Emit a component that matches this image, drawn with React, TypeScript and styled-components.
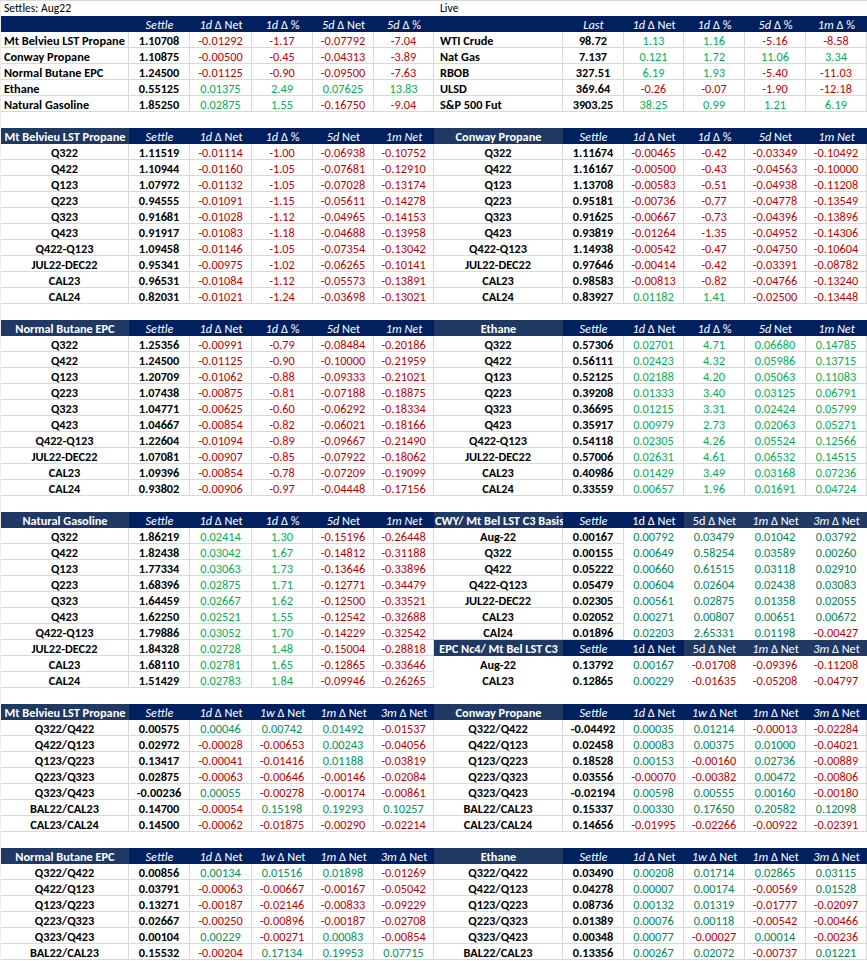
import React from 'react';
import styled, { createGlobalStyle } from 'styled-components';

const Global = createGlobalStyle`
  html, body { margin: 0; padding: 0; background: #ffffff; }
  body { font-family: Carlito, Lato, "Liberation Sans", sans-serif; color: #000; }
`;

const RED = '#c00000';
const GREEN_BRIGHT = '#00b050';
const GREEN_DARK = '#00935a';
const GREEN_TEAL = '#00875a';
const NAVY = '#002060';
const NAVY_LIGHT = '#1f3864';
const GRID = '#d9d9d9';

const LEFT_COLS = '128px 61px 62px 61px 61px 60px';
const RIGHT_COLS = '129px 61px 60px 61px 61px 61px';

type Head = [string, string];
type Row = string[];
type Section = {
  title: string;
  titleAlign?: 'left' | 'center';
  heads: Head[];
  lightHeads?: number[];
  rows: Row[];
  green: string;
  plainValues?: boolean;
  plainAll?: boolean;
};

const Sheet = styled.div`
  display: flex;
  width: 866px;
  border-top: 1px solid ${GRID};
  border-left: 1px solid #ececec;
  font-size: 12.3px;
  line-height: 15px;
`;

const Panel = styled.div`
  display: flex;
  flex-direction: column;
  width: 433px;
`;

const Table = styled.div<{ $cols: string }>`
  display: grid;
  grid-template-columns: ${(p) => p.$cols};
`;

const TitleCell = styled.div<{ $pad: number }>`
  grid-column: 1 / -1;
  height: 15px;
  line-height: 15px;
  font-size: 11.6px;
  padding-left: ${(p) => p.$pad}px;
`;

const Blank = styled.div`
  grid-column: 1 / -1;
  height: 16px;
`;

const HeadCell = styled.div<{ $bg: string; $align?: 'left' | 'center'; $bold?: boolean }>`
  box-sizing: border-box;
  height: 16px;
  padding-top: 1px;
  background: ${(p) => p.$bg};
  color: #ffffff;
  display: flex;
  align-items: center;
  justify-content: ${(p) => (p.$align === 'left' ? 'flex-start' : 'center')};
  padding-left: ${(p) => (p.$align === 'left' ? '1px' : '0')};
  font-weight: ${(p) => (p.$bold ? 700 : 400)};
  white-space: nowrap;
  overflow: hidden;
`;

const It = styled.span`
  font-style: italic;
`;

const DataCell = styled.div<{
  $color: string;
  $bold?: boolean;
  $align?: 'left' | 'center';
  $pad?: number;
  $plain?: boolean;
}>`
  height: 16px;
  box-sizing: border-box;
  padding-top: 1px;
  border-right: 1px solid ${(p) => (p.$plain ? 'transparent' : GRID)};
  border-bottom: 1px solid ${(p) => (p.$plain ? 'transparent' : GRID)};
  color: ${(p) => p.$color};
  font-weight: ${(p) => (p.$bold ? 700 : 400)};
  display: flex;
  align-items: center;
  justify-content: ${(p) => (p.$align === 'left' ? 'flex-start' : 'center')};
  padding-left: ${(p) => p.$pad ?? 0}px;
  white-space: nowrap;
  overflow: hidden;
`;

const HeadText: React.FC<{ h: Head }> = ({ h }) => (
  <>
    {h[0] && <It>{h[0]}</It>}
    {h[1] && <span>{h[1]}</span>}
  </>
);

const tone = (v: string, green: string) => (v.trim().startsWith('-') ? RED : green);

const SectionTable: React.FC<{ s: Section; cols: string }> = ({ s, cols }) => (
  <Table $cols={cols}>
    <HeadCell $bg={NAVY_LIGHT} $bold $align={s.titleAlign}>
      {s.title}
    </HeadCell>
    {s.heads.map((h, i) => (
      <HeadCell key={i} $bg={s.lightHeads?.includes(i) ? NAVY_LIGHT : NAVY}>
        <HeadText h={h} />
      </HeadCell>
    ))}
    {s.rows.map((r, ri) => (
      <React.Fragment key={ri}>
        <DataCell $color="#000" $bold $plain={s.plainAll}>
          {r[0]}
        </DataCell>
        <DataCell $color="#000" $bold $plain={s.plainAll}>
          {r[1]}
        </DataCell>
        {r.slice(2).map((v, vi) => (
          <DataCell key={vi} $color={tone(v, s.green)} $plain={s.plainAll || s.plainValues}>
            {v}
          </DataCell>
        ))}
      </React.Fragment>
    ))}
  </Table>
);

type Summary = { title: string; pad: number; heads: Head[]; rows: Row[] };

const SummaryTable: React.FC<{ s: Summary; cols: string }> = ({ s, cols }) => (
  <Table $cols={cols}>
    <TitleCell $pad={s.pad}>{s.title}</TitleCell>
    <HeadCell $bg={NAVY} />
    {s.heads.map((h, i) => (
      <HeadCell key={i} $bg={NAVY}>
        <HeadText h={h} />
      </HeadCell>
    ))}
    {s.rows.map((r, ri) => (
      <React.Fragment key={ri}>
        <DataCell $color="#000" $bold $align="left" $pad={s.pad}>
          {r[0]}
        </DataCell>
        <DataCell $color="#000" $bold>
          {r[1]}
        </DataCell>
        {r.slice(2).map((v, vi) => (
          <DataCell key={vi} $color={tone(v, GREEN_BRIGHT)}>
            {v}
          </DataCell>
        ))}
      </React.Fragment>
    ))}
  </Table>
);

const D = '\u00a0Δ\u00a0';

const settlesTop: Summary = {
  title: 'Settles: Aug22',
  pad: 3,
  heads: [
    ['Settle', ''],
    ['1d', `${D}Net`],
    ['1d', `${D}%`],
    ['5d', `${D}Net`],
    ['5d', `${D}%`],
  ],
  rows: [
    ['Mt Belvieu LST Propane', '1.10708', '-0.01292', '-1.17', '-0.07792', '-7.04'],
    ['Conway Propane', '1.10875', '-0.00500', '-0.45', '-0.04313', '-3.89'],
    ['Normal Butane EPC', '1.24500', '-0.01125', '-0.90', '-0.09500', '-7.63'],
    ['Ethane', '0.55125', '0.01375', '2.49', '0.07625', '13.83'],
    ['Natural Gasoline', '1.85250', '0.02875', '1.55', '-0.16750', '-9.04'],
  ],
};

const liveTop: Summary = {
  title: 'Live',
  pad: 6,
  heads: [
    ['Last', ''],
    ['1d', `${D}Net`],
    ['1d', `${D}%`],
    ['5d', `${D}%`],
    ['1m', `${D}%`],
  ],
  rows: [
    ['WTI Crude', '98.72', '1.13', '1.16', '-5.16', '-8.58'],
    ['Nat Gas', '7.137', '0.121', '1.72', '11.06', '3.34'],
    ['RBOB', '327.51', '6.19', '1.93', '-5.40', '-11.03'],
    ['ULSD', '369.64', '-0.26', '-0.07', '-1.90', '-12.18'],
    ['S&P 500 Fut', '3903.25', '38.25', '0.99', '1.21', '6.19'],
  ],
};

const outrightHeads: Head[] = [
  ['Settle', ''],
  ['1d', `${D}Net`],
  ['1d', `${D}%`],
  ['5d', '\u00a0Net'],
  ['1m Net', ''],
];

const spreadHeads: Head[] = [
  ['Settle', ''],
  ['1d', `${D}Net`],
  ['1w', `${D}Net`],
  ['1m', `${D}Net`],
  ['3m', `${D}Net`],
];

const basisHeads: Head[] = [
  ['Settle', ''],
  ['', '1d Δ Net'],
  ['', '5d Δ Net'],
  ['1m', `${D}Net`],
  ['3m', `${D}Net`],
];

const mtBelvieu: Section = {
  title: 'Mt Belvieu LST Propane',
  heads: outrightHeads,
  green: GREEN_BRIGHT,
  rows: [
    ['Q322', '1.11519', '-0.01114', '-1.00', '-0.06938', '-0.10752'],
    ['Q422', '1.10944', '-0.01160', '-1.05', '-0.07681', '-0.12910'],
    ['Q123', '1.07972', '-0.01132', '-1.05', '-0.07028', '-0.13174'],
    ['Q223', '0.94555', '-0.01091', '-1.15', '-0.05611', '-0.14278'],
    ['Q323', '0.91681', '-0.01028', '-1.12', '-0.04965', '-0.14153'],
    ['Q423', '0.91917', '-0.01083', '-1.18', '-0.04688', '-0.13958'],
    ['Q422-Q123', '1.09458', '-0.01146', '-1.05', '-0.07354', '-0.13042'],
    ['JUL22-DEC22', '0.95341', '-0.00975', '-1.02', '-0.06265', '-0.10141'],
    ['CAL23', '0.96531', '-0.01084', '-1.12', '-0.05573', '-0.13891'],
    ['CAL24', '0.82031', '-0.01021', '-1.24', '-0.03698', '-0.13021'],
  ],
};

const conway: Section = {
  title: 'Conway Propane',
  heads: outrightHeads,
  green: GREEN_BRIGHT,
  rows: [
    ['Q322', '1.11674', '-0.00465', '-0.42', '-0.03349', '-0.10492'],
    ['Q422', '1.16167', '-0.00500', '-0.43', '-0.04563', '-0.10000'],
    ['Q123', '1.13708', '-0.00583', '-0.51', '-0.04938', '-0.11208'],
    ['Q223', '0.95181', '-0.00736', '-0.77', '-0.04778', '-0.13549'],
    ['Q323', '0.91625', '-0.00667', '-0.73', '-0.04396', '-0.13896'],
    ['Q423', '0.93819', '-0.01264', '-1.35', '-0.04952', '-0.14306'],
    ['Q422-Q123', '1.14938', '-0.00542', '-0.47', '-0.04750', '-0.10604'],
    ['JUL22-DEC22', '0.97646', '-0.00414', '-0.42', '-0.03391', '-0.08782'],
    ['CAL23', '0.98583', '-0.00813', '-0.82', '-0.04766', '-0.13240'],
    ['CAL24', '0.83927', '0.01182', '1.41', '-0.02500', '-0.13448'],
  ],
};

const butane: Section = {
  title: 'Normal Butane EPC',
  heads: outrightHeads,
  green: GREEN_BRIGHT,
  rows: [
    ['Q322', '1.25356', '-0.00991', '-0.79', '-0.08484', '-0.20186'],
    ['Q422', '1.24500', '-0.01125', '-0.90', '-0.10000', '-0.21959'],
    ['Q123', '1.20709', '-0.01062', '-0.88', '-0.09333', '-0.21021'],
    ['Q223', '1.07438', '-0.00875', '-0.81', '-0.07188', '-0.18875'],
    ['Q323', '1.04771', '-0.00625', '-0.60', '-0.06292', '-0.18334'],
    ['Q423', '1.04667', '-0.00854', '-0.82', '-0.06021', '-0.18166'],
    ['Q422-Q123', '1.22604', '-0.01094', '-0.89', '-0.09667', '-0.21490'],
    ['JUL22-DEC22', '1.07081', '-0.00907', '-0.85', '-0.07922', '-0.18062'],
    ['CAL23', '1.09396', '-0.00854', '-0.78', '-0.07209', '-0.19099'],
    ['CAL24', '0.93802', '-0.00906', '-0.97', '-0.04448', '-0.17156'],
  ],
};

const ethane: Section = {
  title: 'Ethane',
  heads: outrightHeads,
  green: GREEN_BRIGHT,
  rows: [
    ['Q322', '0.57306', '0.02701', '4.71', '0.06680', '0.14785'],
    ['Q422', '0.56111', '0.02423', '4.32', '0.05986', '0.13715'],
    ['Q123', '0.52125', '0.02188', '4.20', '0.05063', '0.11083'],
    ['Q223', '0.39208', '0.01333', '3.40', '0.03125', '0.06791'],
    ['Q323', '0.36695', '0.01215', '3.31', '0.02424', '0.05799'],
    ['Q423', '0.35917', '0.00979', '2.73', '0.02063', '0.05271'],
    ['Q422-Q123', '0.54118', '0.02305', '4.26', '0.05524', '0.12566'],
    ['JUL22-DEC22', '0.57006', '0.02631', '4.61', '0.06532', '0.14515'],
    ['CAL23', '0.40986', '0.01429', '3.49', '0.03168', '0.07236'],
    ['CAL24', '0.33559', '0.00657', '1.96', '0.01691', '0.04724'],
  ],
};

const natGas: Section = {
  title: 'Natural Gasoline',
  heads: outrightHeads,
  green: GREEN_BRIGHT,
  rows: [
    ['Q322', '1.86219', '0.02414', '1.30', '-0.15196', '-0.26448'],
    ['Q422', '1.82438', '0.03042', '1.67', '-0.14812', '-0.31188'],
    ['Q123', '1.77334', '0.03063', '1.73', '-0.13646', '-0.33896'],
    ['Q223', '1.68396', '0.02875', '1.71', '-0.12771', '-0.34479'],
    ['Q323', '1.64459', '0.02667', '1.62', '-0.12500', '-0.33521'],
    ['Q423', '1.62250', '0.02521', '1.55', '-0.12542', '-0.32688'],
    ['Q422-Q123', '1.79886', '0.03052', '1.70', '-0.14229', '-0.32542'],
    ['JUL22-DEC22', '1.84328', '0.02728', '1.48', '-0.15004', '-0.28818'],
    ['CAL23', '1.68110', '0.02781', '1.65', '-0.12865', '-0.33646'],
    ['CAL24', '1.51429', '0.02783', '1.84', '-0.09946', '-0.26265'],
  ],
};

const cwyBasis: Section = {
  title: 'CWY/ Mt Bel LST C3 Basis',
  titleAlign: 'left',
  heads: basisHeads,
  lightHeads: [2, 3, 4],
  green: GREEN_TEAL,
  plainValues: true,
  rows: [
    ['Aug-22', '0.00167', '0.00792', '0.03479', '0.01042', '0.03792'],
    ['Q322', '0.00155', '0.00649', '0.58254', '0.03589', '0.00260'],
    ['Q422', '0.05222', '0.00660', '0.61515', '0.03118', '0.02910'],
    ['Q422-Q123', '0.05479', '0.00604', '0.02604', '0.02438', '0.03083'],
    ['JUL22-DEC22', '0.02305', '0.00561', '0.02875', '0.01358', '0.02055'],
    ['CAL23', '0.02052', '0.00271', '0.00807', '0.00651', '0.00672'],
    ['CAl24', '0.01896', '0.02203', '2.65331', '0.01198', '-0.00427'],
  ],
};

const epcBasis: Section = {
  title: 'EPC Nc4/ Mt Bel LST C3',
  heads: basisHeads,
  lightHeads: [2, 3, 4],
  green: GREEN_TEAL,
  plainAll: true,
  rows: [
    ['Aug-22', '0.13792', '0.00167', '-0.01708', '-0.09396', '-0.11208'],
    ['CAL23', '0.12865', '0.00229', '-0.01635', '-0.05208', '-0.04797'],
  ],
};

const mtBelSpreads: Section = {
  title: 'Mt Belvieu LST Propane',
  heads: spreadHeads,
  green: GREEN_DARK,
  rows: [
    ['Q322/Q422', '0.00575', '0.00046', '0.00742', '0.01492', '-0.01537'],
    ['Q422/Q123', '0.02972', '-0.00028', '-0.00653', '0.00243', '-0.04056'],
    ['Q123/Q223', '0.13417', '-0.00041', '-0.01416', '0.01188', '-0.03819'],
    ['Q223/Q323', '0.02875', '-0.00063', '-0.00646', '-0.00146', '-0.02084'],
    ['Q323/Q423', '-0.00236', '0.00055', '-0.00278', '-0.00174', '-0.00861'],
    ['BAL22/CAL23', '0.14700', '-0.00054', '0.15198', '0.19293', '0.10257'],
    ['CAL23/CAL24', '0.14500', '-0.00062', '-0.01875', '-0.00290', '-0.02214'],
  ],
};

const conwaySpreads: Section = {
  title: 'Conway Propane',
  heads: spreadHeads,
  green: GREEN_TEAL,
  rows: [
    ['Q322/Q422', '-0.04492', '0.00035', '0.01214', '-0.00013', '-0.02284'],
    ['Q422/Q123', '0.02458', '0.00083', '0.00375', '0.01000', '-0.04021'],
    ['Q123/Q223', '0.18528', '0.00153', '-0.00160', '0.02736', '-0.00889'],
    ['Q223/Q323', '0.03556', '-0.00070', '-0.00382', '0.00472', '-0.00806'],
    ['Q323/Q423', '-0.02194', '0.00598', '0.00555', '0.00160', '-0.00180'],
    ['BAL22/CAL23', '0.15337', '0.00330', '0.17650', '0.20582', '0.12098'],
    ['CAL23/CAL24', '0.14656', '-0.01995', '-0.02266', '-0.00922', '-0.02391'],
  ],
};

const butaneSpreads: Section = {
  title: 'Normal Butane EPC',
  heads: spreadHeads,
  green: GREEN_DARK,
  rows: [
    ['Q322/Q422', '0.00856', '0.00134', '0.01516', '0.01898', '-0.01269'],
    ['Q422/Q123', '0.03791', '-0.00063', '-0.00667', '-0.00167', '-0.05042'],
    ['Q123/Q223', '0.13271', '-0.00187', '-0.02146', '-0.00833', '-0.09229'],
    ['Q223/Q323', '0.02667', '-0.00250', '-0.00896', '-0.00187', '-0.02708'],
    ['Q323/Q423', '0.00104', '0.00229', '-0.00271', '0.00083', '-0.00854'],
    ['BAL22/CAL23', '0.15532', '-0.00204', '0.17134', '0.19953', '0.07715'],
  ],
};

const ethaneSpreads: Section = {
  title: 'Ethane',
  heads: spreadHeads,
  green: GREEN_TEAL,
  rows: [
    ['Q322/Q422', '0.03490', '0.00208', '0.01714', '0.02865', '0.03115'],
    ['Q422/Q123', '0.04278', '0.00007', '0.00174', '-0.00569', '0.01528'],
    ['Q123/Q223', '0.08736', '0.00132', '0.01319', '-0.01777', '-0.02097'],
    ['Q223/Q323', '0.01389', '0.00076', '0.00118', '-0.00542', '-0.00466'],
    ['Q323/Q423', '0.00348', '0.00077', '-0.00027', '0.00014', '-0.00236'],
    ['BAL22/CAL23', '0.13356', '0.00267', '0.02072', '-0.00737', '0.01221'],
  ],
};

const Gap: React.FC<{ cols: string }> = ({ cols }) => (
  <Table $cols={cols}>
    <Blank />
  </Table>
);

export default function App() {
  return (
    <>
      <Global />
      <Sheet>
        <Panel>
          <SummaryTable s={settlesTop} cols={LEFT_COLS} />
          <Gap cols={LEFT_COLS} />
          <SectionTable s={mtBelvieu} cols={LEFT_COLS} />
          <Gap cols={LEFT_COLS} />
          <SectionTable s={butane} cols={LEFT_COLS} />
          <Gap cols={LEFT_COLS} />
          <SectionTable s={natGas} cols={LEFT_COLS} />
          <Gap cols={LEFT_COLS} />
          <SectionTable s={mtBelSpreads} cols={LEFT_COLS} />
          <Gap cols={LEFT_COLS} />
          <SectionTable s={butaneSpreads} cols={LEFT_COLS} />
        </Panel>
        <Panel>
          <SummaryTable s={liveTop} cols={RIGHT_COLS} />
          <Gap cols={RIGHT_COLS} />
          <SectionTable s={conway} cols={RIGHT_COLS} />
          <Gap cols={RIGHT_COLS} />
          <SectionTable s={ethane} cols={RIGHT_COLS} />
          <Gap cols={RIGHT_COLS} />
          <SectionTable s={cwyBasis} cols={RIGHT_COLS} />
          <SectionTable s={epcBasis} cols={RIGHT_COLS} />
          <Gap cols={RIGHT_COLS} />
          <SectionTable s={conwaySpreads} cols={RIGHT_COLS} />
          <Gap cols={RIGHT_COLS} />
          <SectionTable s={ethaneSpreads} cols={RIGHT_COLS} />
        </Panel>
      </Sheet>
    </>
  );
}
